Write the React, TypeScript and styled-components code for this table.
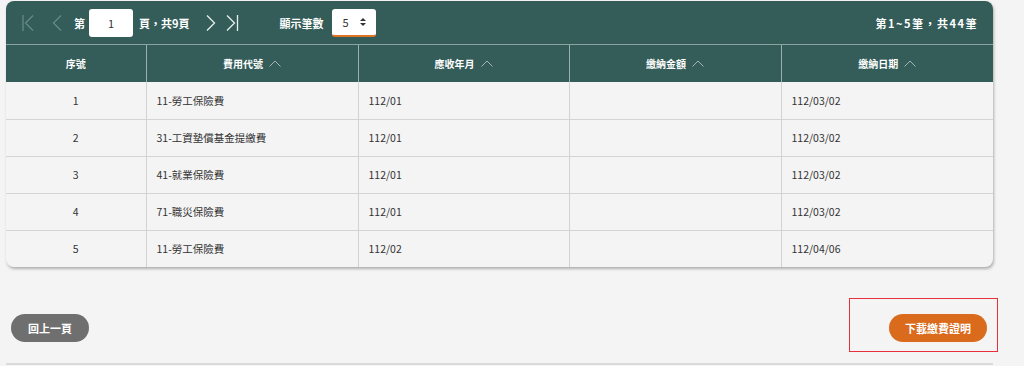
import React from "react";
import styled, { createGlobalStyle } from "styled-components";

const Global = createGlobalStyle`
  html, body { margin: 0; padding: 0; background: #f4f4f4; }
  body { font-family: "Noto Sans CJK TC", "Noto Sans", sans-serif; color: #333; }
  * { box-sizing: border-box; }
`;

const Page = styled.div`
  width: 1024px;
  height: 366px;
  padding: 1px 0 0 6px;
  overflow: hidden;
`;

const Card = styled.div`
  width: 987px;
  background: #f4f4f4;
  border-radius: 8px;
  overflow: hidden;
  box-shadow: 1px 2px 3px rgba(0, 0, 0, 0.28);
`;

const Toolbar = styled.div`
  height: 44px;
  background: #345d59;
  display: flex;
  align-items: center;
  padding: 0 15px 0 16px;
  font-size: 11px;
  font-weight: 700;
  color: #fff;
  border-bottom: 1px solid #8aa3a0;
`;

const NavBtn = styled.span<{ $dim?: boolean; $mr?: number }>`
  display: inline-flex;
  width: 14px;
  height: 16px;
  color: ${(p) => (p.$dim ? "#668a86" : "#e8eeee")};
  margin-right: ${(p) => p.$mr ?? 0}px;
`;

const Label = styled.span<{ $ml?: number; $mr?: number; $ls?: number }>`
  margin-left: ${(p) => p.$ml ?? 0}px;
  margin-right: ${(p) => p.$mr ?? 0}px;
  letter-spacing: ${(p) => p.$ls ?? 0}px;
  white-space: nowrap;
`;

const PageInput = styled.div`
  width: 44px;
  height: 28px;
  background: #fff;
  border-radius: 3px;
  color: #333;
  font-weight: 400;
  display: flex;
  align-items: center;
  justify-content: center;
  font-size: 11px;
`;

const Select = styled.div`
  width: 44px;
  height: 28px;
  background: #fff;
  border-radius: 3px;
  border-bottom: 2px solid #e07324;
  color: #333;
  font-weight: 400;
  display: flex;
  align-items: center;
  justify-content: space-between;
  padding: 0 10px 0 11px;
  font-size: 11px;
`;

const Spacer = styled.div`
  flex: 1;
`;

const Table = styled.table`
  width: 100%;
  border-collapse: collapse;
  table-layout: fixed;
`;

const Th = styled.th`
  height: 37px;
  background: #345d59;
  color: #fff;
  font-size: 10px;
  font-weight: 700;
  text-align: center;
  border-left: 1px solid #9ab0ad;
  padding: 0;
  &:first-child { border-left: none; }
`;

const ThInner = styled.span`
  display: inline-flex;
  align-items: center;
  gap: 6px;
`;

const Td = styled.td<{ $center?: boolean }>`
  height: 37px;
  font-size: 10.5px;
  color: #333;
  text-align: ${(p) => (p.$center ? "center" : "left")};
  padding: 0 0 0 ${(p) => (p.$center ? 0 : 10)}px;
  border-left: 1px solid #d2d2d2;
  border-top: 1px solid #d4d4d4;
  &:first-child { border-left: none; }
`;

const Tr = styled.tr`
  &:first-child td { border-top: none; }
`;

const Footer = styled.div`
  width: 987px;
  height: 98px;
  display: flex;
  justify-content: space-between;
  align-items: flex-start;
  padding: 47px 0 0 5px;
  border-bottom: 2px solid #dadada;
`;

const PillButton = styled.button<{ $tone: "gray" | "orange" }>`
  height: 28px;
  padding: 0 ${(p) => (p.$tone === "gray" ? 17 : 16)}px;
  border: none;
  border-radius: 14px;
  background: ${(p) => (p.$tone === "gray" ? "#6f6f6f" : "#da6a1c")};
  color: #fff;
  font-family: "Noto Sans CJK TC", "Noto Sans", sans-serif;
  font-size: 11px;
  font-weight: 700;
  white-space: nowrap;
`;

const Highlight = styled.div`
  width: 149px;
  height: 54px;
  border: 1px solid #e8303c;
  margin-right: -5px;
  margin-top: -16px;
  display: flex;
  justify-content: flex-end;
  padding: 15px 10px 0 0;
`;

const Chevron = ({ dir, bar }: { dir: "l" | "r"; bar?: boolean }) => (
  <svg width="14" height="16" viewBox="0 0 14 16" fill="none" stroke="currentColor" strokeWidth="1.3">
    {dir === "l" ? (
      <>
        <polyline points="11,0.5 3.5,8 11,15.5" />
        {bar && <line x1="1" y1="0" x2="1" y2="16" />}
      </>
    ) : (
      <>
        <polyline points="2,0.5 9.5,8 2,15.5" />
        {bar && <line x1="12.5" y1="0" x2="12.5" y2="16" />}
      </>
    )}
  </svg>
);

const SortUp = () => (
  <svg width="12" height="7" viewBox="0 0 12 7" fill="none" stroke="#9fb6b3" strokeWidth="1">
    <polyline points="0.5,6.5 6,1 11.5,6.5" />
  </svg>
);

const UpDown = () => (
  <svg width="6" height="8" viewBox="0 0 6 8" fill="#333">
    <polygon points="3,0 6,3 0,3" />
    <polygon points="0,5 6,5 3,8" />
  </svg>
);

const rows = [
  ["1", "11-勞工保險費", "112/01", "", "112/03/02"],
  ["2", "31-工資墊償基金提繳費", "112/01", "", "112/03/02"],
  ["3", "41-就業保險費", "112/01", "", "112/03/02"],
  ["4", "71-職災保險費", "112/01", "", "112/03/02"],
  ["5", "11-勞工保險費", "112/02", "", "112/04/06"],
];

const widths = [140, 212, 211, 212, 212];

export default function App() {
  return (
    <>
      <Global />
      <Page>
        <Card>
          <Toolbar>
            <NavBtn $dim $mr={14}><Chevron dir="l" bar /></NavBtn>
            <NavBtn $dim $mr={10}><Chevron dir="l" /></NavBtn>
            <Label $mr={4}>第</Label>
            <PageInput>1</PageInput>
            <Label $ml={6} $mr={15}>頁，共9頁</Label>
            <NavBtn $mr={6}><Chevron dir="r" /></NavBtn>
            <NavBtn><Chevron dir="r" bar /></NavBtn>
            <Label $ml={41} $mr={8}>顯示筆數</Label>
            <Select>
              <span>5</span>
              <UpDown />
            </Select>
            <Spacer />
            <Label $ls={1.5}>第1~5筆，共44筆</Label>
          </Toolbar>
          <Table>
            <colgroup>
              {widths.map((w, i) => (
                <col key={i} style={{ width: w }} />
              ))}
            </colgroup>
            <thead>
              <tr>
                <Th>序號</Th>
                <Th><ThInner>費用代號<SortUp /></ThInner></Th>
                <Th><ThInner>應收年月<SortUp /></ThInner></Th>
                <Th><ThInner>繳納金額<SortUp /></ThInner></Th>
                <Th><ThInner>繳納日期<SortUp /></ThInner></Th>
              </tr>
            </thead>
            <tbody>
              {rows.map((r) => (
                <Tr key={r[0]}>
                  {r.map((c, i) => (
                    <Td key={i} $center={i === 0}>{c}</Td>
                  ))}
                </Tr>
              ))}
            </tbody>
          </Table>
        </Card>
        <Footer>
          <PillButton $tone="gray">回上一頁</PillButton>
          <Highlight>
            <PillButton $tone="orange">下載繳費證明</PillButton>
          </Highlight>
        </Footer>
      </Page>
    </>
  );
}
